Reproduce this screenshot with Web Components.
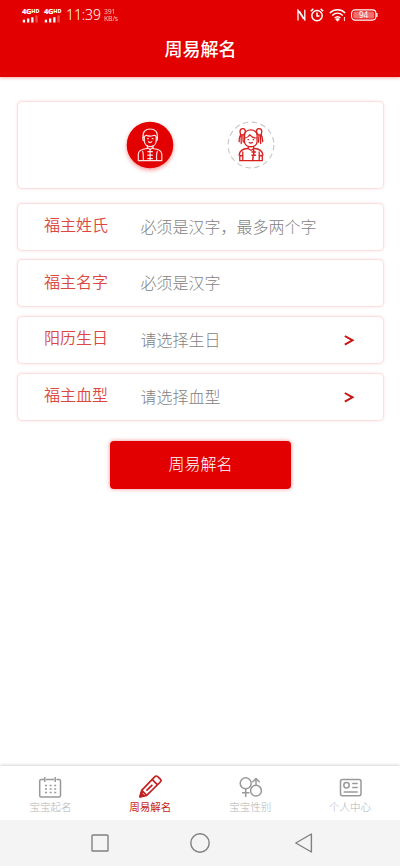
<!DOCTYPE html>
<html lang="zh-CN">
<head>
<meta charset="utf-8">
<title>周易解名</title>
<style>
html,body{margin:0;padding:0}
body{font-family:"Noto Sans CJK SC","Noto Sans",sans-serif;background:#fff}
</style>
</head>
<body>
<name-app></name-app>
<script>
const define = (tag, css, html) => customElements.define(tag, class extends HTMLElement {
  constructor() {
    super();
    this.attachShadow({mode: 'open'}).innerHTML =
      `<style>*{box-sizing:border-box}${css}</style>${typeof html === 'function' ? html(this) : html}`;
  }
});

const signal = `<div class="sig"><b>4G<sup>HD</sup></b><svg width="16" height="8" viewBox="0 0 16 8" fill="#fff"><path d="M.8 4.800h2.300V7.500H.8zM5 3.600h2.300v3.900H5zM9.200 2.200h2.300v5.300H9.200z"/><path d="M13.400 .5h2.300v7h-2.300z" opacity=".3"/></svg></div>`;

define('status-bar', `
:host{display:flex;height:30px;padding:0 22px;align-items:center;color:#fff;font-family:"Noto Sans",Roboto,sans-serif}
.sig{width:22px;height:14px;display:flex;flex-direction:column}
.sig b{font-size:7.500px;line-height:7px;font-weight:800;white-space:nowrap;height:7px;letter-spacing:-.3px}
.sig sup{font-size:5.500px;line-height:0;vertical-align:1.500px;letter-spacing:0}
svg{display:block;flex:none}
time{font:300 14px/18px "Noto Sans",sans-serif;width:38px;white-space:nowrap;letter-spacing:-.1px}
.speed{font-size:6.800px;line-height:7.500px;opacity:.75;white-space:nowrap;letter-spacing:-.1px}
.right{margin-left:auto;display:flex;align-items:center}
.battery{position:relative;width:27px;height:12px;display:block}
.battery span{position:absolute;inset:0 2px 0 0;text-align:center;font-size:8px;line-height:12px}
`, `${signal}${signal}<time>11:39</time><div class="speed">391<br>KB/s</div>
<div class="right">
<svg width="10" height="12" viewBox="0 0 10 12" style="margin-right:4px" fill="none" stroke="#fff" stroke-width="1.300"><path d="M2 11.500V1.200l5.600 8.700M3.500 2.400 8.800 10.800V.8"/></svg>
<svg width="14" height="14" viewBox="0 0 14 14" style="margin-right:5px" fill="none" stroke="#fff" stroke-width="1.500"><circle cx="7" cy="7.600" r="5.200"/><path d="M7 4.500v3.600h2.500M.8 3.200 3.300.9M13.200 3.200 10.700.9"/></svg>
<svg width="18" height="14" viewBox="0 0 18 14" style="margin-right:4px" fill="none" stroke="#fff" stroke-width="1.500"><path d="M.8 5C5.200.8 12 .8 16.200 5M3.200 7.500c3.200-3 7.400-3 10.600 0M5.600 10c2-1.700 4-1.700 5.800 0"/><path d="m6.500 11 2 2.500 2-2.500q-2-1.500-4 0z" fill="#fff" stroke-width=".5"/><path d="M15.500 9v4" stroke-width="1.200" opacity=".8"/></svg>
<div class="battery"><svg width="27" height="12" viewBox="0 0 27 12"><rect x=".6" y=".9" width="24.300" height="10.200" rx="3.500" fill="none" stroke="#fff" stroke-width="1.100"/><rect x="2.300" y="2.500" width="20.900" height="7" rx="1.500" fill="#fff" opacity=".43"/><path d="M25.900 4v4" stroke="#fff" stroke-width="1.300"/></svg><span>94</span></div>
</div>`);

define('app-header', `
:host{display:block;height:76.500px;background:#e30000;box-shadow:0 1px 3px rgba(227,0,0,.35);flex:none}
h1{margin:0;color:#fff;text-align:center;font-size:18px;font-weight:500;line-height:36px;padding-left:1px}
`, `<status-bar></status-bar><h1><slot></slot></h1>`);

define('soft-card', `
:host{display:block;border:1px solid #fae0e0;border-radius:5px;box-shadow:0 0 3px rgba(227,0,0,.13);background:#fff;box-sizing:border-box}
`, `<slot></slot>`);

define('avatar-option', `
:host{display:block;width:48px;height:48px}
svg{display:block;overflow:visible}
.boy{filter:drop-shadow(0 2px 2px rgba(227,0,0,.4))}
`, el => el.getAttribute('kind') === 'boy' ? `
<svg width="48" height="48" viewBox="0 0 48 48"><circle class="boy" cx="24" cy="24" r="23.300" fill="#e30000"/>
<g fill="none" stroke="#fff" stroke-width="1.200" stroke-opacity=".88" stroke-linejoin="round" stroke-linecap="round">
<path d="M17.200 16.500C16.300 11 19.500 8 24.200 8s7.900 3 7 8.500"/>
<path d="M18.300 16.200q1-2.400 3-1.600 3 1.100 6.200-.1 2-.7 2.700 1.700v3.500c0 7.800-11.900 7.800-11.900 0zM18.300 16.200q-2-.5-1.500 1.800.2 2 1.700 2M30.200 16.200q1.600-.4 1.300 1.800-.2 2-1.600 2"/>
<path d="M21.500 17.700h.8M26.200 17.700h.8M22.500 20.700q1.700 1.600 3.300 0M21.300 24.600v2.700M27 24.600v2.700M21.300 26.600l2.900 1.800 2.800-1.800"/>
<path d="M21.200 27.500c-5.600.6-8.900 1.700-8.900 5.700v6.500h23.500v-6.500c0-4-3.300-5.100-8.900-5.700M16.600 30.500c1 1.700.7 5 .7 9M31.300 30.500c-1 1.700-.7 5-.7 9M24.100 28.600v11"/>
<path d="M21.800 30.700h4.600M21.800 34.200h4.600M21.800 37.700h4.600"/></g></svg>` : `
<svg width="48" height="48" viewBox="0 0 48 48"><circle cx="24" cy="24" r="22.900" fill="#fff" stroke="#c6c6c6" stroke-width="1.100" stroke-dasharray="5.400 3.600"/>
<g fill="none" stroke="#d92020" stroke-width="1.300" stroke-linejoin="round" stroke-linecap="round">
<path d="M17.500 20.500V14.500c0-7.500 12.600-7.500 12.600 0v6c0 7-12.600 7-12.600 0zM17.800 17.200q3.500-.6 5-3.400 2.400 3 7.100 3.400"/>
<path d="M18.300 11c.4-4.400-4.800-4.500-5.300-.7l.6 3.400 3 .2zM29.500 11c-.4-4.400 4.800-4.500 5.300-.7l-.6 3.400-3 .2z"/>
<path d="M13.500 14c-1.300 2-1.500 4-1.300 6.700M14.200 14.500v8M15.800 14.200l.5 7M34.300 14c1.300 2 1.500 4 1.300 6.700M33.600 14.500v8M32 14.200l-.5 7"/>
<path d="M21 18.700h.5M26.200 18.700h.5M22.300 21.500q1.600 1.300 3.200 0M21.300 25.500v2.200l2.700 1.500 2.700-1.500v-2.200"/>
<path d="M20.800 27.500c-5 .2-8.200 2-8.700 6.600l3.700.8M27.200 27.500c5 .2 8.200 2 8.700 6.600l-3.700.8M15.800 31v8.700M32.200 31v8.700M12.800 34.500v5.200h22.500v-5.200"/>
<path d="M26.300 28.200q1.200 4-.2 6.800l-.4 4.500M25 31h3.500M25 34.300h3.500" stroke-width="1.500"/></g></svg>`);

define('form-row', `
:host{display:block;height:47.600px}
soft-card{display:flex;align-items:center;height:48px;padding:0 28px 0 26px;font-size:16px;line-height:24px}
.label{color:#dc4741;font-weight:350;width:96.500px;padding-bottom:5px;flex:none}
.hint{color:#828282;font-weight:300;flex:1;white-space:nowrap;padding-bottom:2px}
svg{display:block}
`, el => `<soft-card><span class="label">${el.getAttribute('label')}</span><span class="hint">${el.getAttribute('hint')}</span>${el.hasAttribute('arrow') ? '<svg width="12" height="12" viewBox="0 0 12 12" fill="none" stroke="#c91212" stroke-width="2"><path d="M1.800 2 9.500 6.300 1.800 10.700"/></svg>' : ''}</soft-card>`);

define('submit-button', `
:host{display:block;width:181.500px;height:48px}
button{width:100%;height:100%;padding:0 0 3px;border:0;border-radius:4px;background:#e30000;color:#fff;font:300 16px/24px "Noto Sans CJK SC",sans-serif;box-shadow:0 0 4px rgba(227,0,0,.45)}
`, `<button><slot></slot></button>`);

const tabIcons = {
  calendar: `<path d="M6 4.500H3.200Q1.700 4.500 1.700 6v14.500q0 1.500 1.500 1.500h17.800q1.500 0 1.500-1.500V6q0-1.500-1.500-1.500h-2.600M8 4.500h8M6.800 2v5M17.200 2v5" /><path d="M7 10.500h12M7 14h12M7 17.500h12" stroke-dasharray="2 2.600"/>`,
  pencil: `<path d="M2 21.800l1.700-6.400L16.900 1.700q1.400-1.400 2.800 0l2.600 2.500q1.400 1.400 0 2.800L8.700 20.300zM3.700 15.400l5 4.900M14.300 4.600l5.200 5.200M8.400 15.700l6-5.800" stroke-width="1.700"/><path d="M2 21.800l1-4 3.200 3z" fill="currentColor"/>`,
  gender: `<circle cx="7.700" cy="8.300" r="5.500"/><path d="M7.700 13.800V22M4 17.800h7.400"/><circle cx="18" cy="15.700" r="5.400"/><path d="M18 10.300V3.600M14.300 7.200 18 3.500l3.700 3.700"/>`,
  card: `<rect x="2.500" y="4.500" width="20.500" height="16.300" rx="2"/><circle cx="8.500" cy="10.200" r="2.700"/><path d="M14.200 8.500h5.500M14.200 12.500h5.500M5.700 17h14"/>`
};
define('tab-item', `
:host{display:flex;flex-direction:column;align-items:center;flex:1;color:#b4b4b4;padding-top:9.500px;box-sizing:border-box}
:host([active]){color:#c41c1c}
svg{display:block;color:#999}
:host([active]) svg{color:#c4201f}
span{font-size:10.500px;line-height:16px;font-weight:300}
:host([active]) span{font-weight:400}
`, el => `<svg width="24" height="24" viewBox="0 0 24 24" fill="none" stroke="currentColor" stroke-width="1.500" stroke-linejoin="round">${tabIcons[el.getAttribute('icon')]}</svg><span><slot></slot></span>`);

define('tab-bar', `
:host{display:flex;height:54.500px;background:#fff;box-shadow:0 -1px 3px rgba(0,0,0,.17);flex:none;box-sizing:border-box;padding-left:.5px}
`, `<tab-item icon="calendar">宝宝起名</tab-item><tab-item icon="pencil" active>周易解名</tab-item><tab-item icon="gender">宝宝性别</tab-item><tab-item icon="card">个人中心</tab-item>`);

define('system-nav', `
:host{display:flex;height:46px;background:#f4f4f4;align-items:center;justify-content:center;gap:78px;flex:none;box-sizing:border-box}
svg{display:block}
`, `<svg width="22" height="22" viewBox="0 0 22 22" fill="none" stroke="#808080" stroke-width="1.400"><rect x="3" y="3" width="16" height="16" rx=".8"/></svg>
<svg width="22" height="22" viewBox="0 0 22 22" fill="none" stroke="#808080" stroke-width="1.400"><circle cx="11" cy="11" r="9.200"/></svg>
<svg width="22" height="22" viewBox="-4 0 22 22" fill="none" stroke="#808080" stroke-width="1.400" stroke-linejoin="round" overflow="visible"><path d="M18.400 2v18L2.800 11z"/></svg>`);

define('name-app', `
:host{display:flex;flex-direction:column;width:400px;height:866px;background:#fff;overflow:hidden}
main{flex:1;padding:24.500px 16px 0 17px;display:flex;flex-direction:column;min-height:0}
.people{height:88px;display:flex;justify-content:center;gap:53px;padding:19px 0 0;flex:none}
.rows{display:flex;flex-direction:column;gap:9px;margin-top:13.800px}
submit-button{margin:20.700px auto 0}
`, `<app-header>周易解名</app-header>
<main><soft-card class="people"><avatar-option kind="boy"></avatar-option><avatar-option kind="girl"></avatar-option></soft-card>
<div class="rows"><form-row label="福主姓氏" hint="必须是汉字，最多两个字"></form-row><form-row label="福主名字" hint="必须是汉字"></form-row><form-row label="阳历生日" hint="请选择生日" arrow></form-row><form-row label="福主血型" hint="请选择血型" arrow></form-row></div>
<submit-button>周易解名</submit-button></main>
<tab-bar></tab-bar><system-nav></system-nav>`);
</script>
</body>
</html>
